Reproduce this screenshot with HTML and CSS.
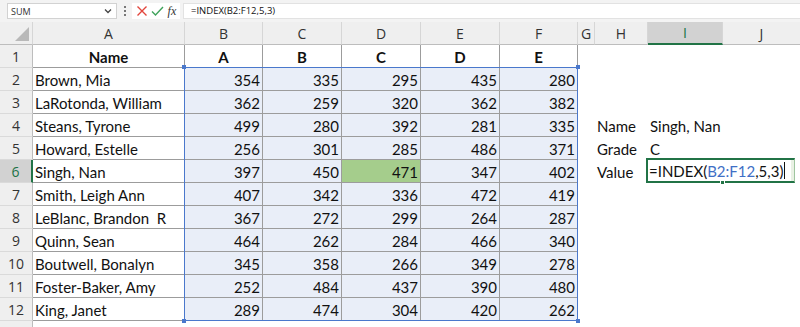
FILE: index.html
```html
<!DOCTYPE html>
<html lang="en">
<head>
    <meta charset="UTF-8">
    <meta name="viewport" content="width=device-width, initial-scale=1.0">
    <title>INDEX example</title>
    <link rel="stylesheet" href="styles.css">
</head>
<body>
    <div class="formula-bar">
        <div class="name-box">
            <span>SUM</span>
            <svg width="8" height="6" viewBox="0 0 8 6"><path d="M1 1.5 L4 4.5 L7 1.5" fill="none" stroke="#444" stroke-width="1.3"/></svg>
        </div>
        <div class="grip"><i></i><i></i><i></i></div>
        <div class="fx-buttons">
            <svg width="12" height="12" viewBox="0 0 12 12"><path d="M1.5 1.5 L10.5 10.5 M10.5 1.5 L1.5 10.5" stroke="#e2453c" stroke-width="1.4"/></svg>
            <svg width="13" height="12" viewBox="0 0 13 12"><path d="M1 6.5 L4.5 10 L12 2" fill="none" stroke="#3fa35b" stroke-width="1.4"/></svg>
            <span class="fx">fx</span>
        </div>
        <div class="formula-input">=INDEX(B2:F12,5,3)</div>
    </div>

    <div class="sheet">
        <div class="ch corner"><svg width="14" height="14" viewBox="0 0 14 14"><polygon points="14,0 14,14 0,14" fill="#b9b9b9"/></svg></div>
        <div class="ch">A</div>
        <div class="ch">B</div>
        <div class="ch">C</div>
        <div class="ch">D</div>
        <div class="ch">E</div>
        <div class="ch">F</div>
        <div class="ch">G</div>
        <div class="ch">H</div>
        <div class="ch active">I</div>
        <div class="ch">J</div>

        <div class="rh">1</div>
        <div class="c hd">Name</div>
        <div class="c hd">A</div>
        <div class="c hd">B</div>
        <div class="c hd">C</div>
        <div class="c hd">D</div>
        <div class="c hd">E</div>
        <div class="e"></div><div class="e"></div><div class="e"></div><div class="e"></div>

        <div class="rh">2</div>
        <div class="c">Brown, Mia</div>
        <div class="c num ref">354</div><div class="c num ref">335</div><div class="c num ref">295</div><div class="c num ref">435</div><div class="c num ref">280</div>
        <div class="e"></div><div class="e"></div><div class="e"></div><div class="e"></div>

        <div class="rh">3</div>
        <div class="c">LaRotonda, William</div>
        <div class="c num ref">362</div><div class="c num ref">259</div><div class="c num ref">320</div><div class="c num ref">362</div><div class="c num ref">382</div>
        <div class="e"></div><div class="e"></div><div class="e"></div><div class="e"></div>

        <div class="rh">4</div>
        <div class="c">Steans, Tyrone</div>
        <div class="c num ref">499</div><div class="c num ref">280</div><div class="c num ref">392</div><div class="c num ref">281</div><div class="c num ref">335</div>
        <div class="e"></div><div class="e label">Name</div><div class="e label">Singh, Nan</div><div class="e"></div>

        <div class="rh">5</div>
        <div class="c">Howard, Estelle</div>
        <div class="c num ref">256</div><div class="c num ref">301</div><div class="c num ref">285</div><div class="c num ref">486</div><div class="c num ref">371</div>
        <div class="e"></div><div class="e label">Grade</div><div class="e label">C</div><div class="e"></div>

        <div class="rh active">6</div>
        <div class="c">Singh, Nan</div>
        <div class="c num ref">397</div><div class="c num ref">450</div><div class="c num hit">471</div><div class="c num ref">347</div><div class="c num ref">402</div>
        <div class="e"></div><div class="e label">Value</div>
        <div class="e editing">
            <div class="edit-box">
                <span class="edit-text">=INDEX(<span class="ref-text">B2:F12</span>,5,3)</span><span class="caret"></span>
                <span class="edit-rest"></span>
                <span class="handle"></span>
            </div>
        </div>

        <div class="rh">7</div>
        <div class="c">Smith, Leigh Ann</div>
        <div class="c num ref">407</div><div class="c num ref">342</div><div class="c num ref">336</div><div class="c num ref">472</div><div class="c num ref">419</div>
        <div class="e"></div><div class="e"></div><div class="e"></div><div class="e"></div>

        <div class="rh">8</div>
        <div class="c">LeBlanc, Brandon&nbsp; R</div>
        <div class="c num ref">367</div><div class="c num ref">272</div><div class="c num ref">299</div><div class="c num ref">264</div><div class="c num ref">287</div>
        <div class="e"></div><div class="e"></div><div class="e"></div><div class="e"></div>

        <div class="rh">9</div>
        <div class="c">Quinn, Sean</div>
        <div class="c num ref">464</div><div class="c num ref">262</div><div class="c num ref">284</div><div class="c num ref">466</div><div class="c num ref">340</div>
        <div class="e"></div><div class="e"></div><div class="e"></div><div class="e"></div>

        <div class="rh">10</div>
        <div class="c">Boutwell, Bonalyn</div>
        <div class="c num ref">345</div><div class="c num ref">358</div><div class="c num ref">266</div><div class="c num ref">349</div><div class="c num ref">278</div>
        <div class="e"></div><div class="e"></div><div class="e"></div><div class="e"></div>

        <div class="rh">11</div>
        <div class="c">Foster-Baker, Amy</div>
        <div class="c num ref">252</div><div class="c num ref">484</div><div class="c num ref">437</div><div class="c num ref">390</div><div class="c num ref">480</div>
        <div class="e"></div><div class="e"></div><div class="e"></div><div class="e"></div>

        <div class="rh">12</div>
        <div class="c">King, Janet</div>
        <div class="c num ref">289</div><div class="c num ref">474</div><div class="c num ref">304</div><div class="c num ref">420</div><div class="c num ref">262</div>
        <div class="e"></div><div class="e"></div><div class="e"></div><div class="e"></div>

        <!-- row 13 only peeks in at the bottom edge -->
        <div class="rh"></div>

        <!-- blue outline of the referenced range B2:F12 -->
        <div class="range">
            <i class="dot tl"></i><i class="dot tr"></i><i class="dot bl"></i><i class="dot br"></i>
        </div>
    </div>
</body>
</html>
```

FILE: styles.css
```css
* {
    box-sizing: border-box;
}
body {
    margin: 0;
    height: 327px;
    overflow: hidden;
    background: #fff;
    font-family: Lato, "Liberation Sans", sans-serif;
}

/* formula bar */
.formula-bar {
    display: flex;
    align-items: center;
    height: 22px;
    background: #f3f3f3;
    padding-left: 7px;
}
.name-box {
    width: 110px;
    height: 16px;
    background: #fff;
    border: 1px solid #d2d2d2;
    display: flex;
    align-items: center;
    justify-content: space-between;
    padding: 0 4px 0 3px;
    font-family: "Open Sans", sans-serif;
    font-size: 9px;
    color: #333;
}
.grip {
    width: 15px;
    display: flex;
    flex-direction: column;
    align-items: center;
    gap: 2px;
}
.grip i {
    width: 2px;
    height: 2px;
    background: #777;
}
.fx-buttons {
    width: 48px;
    height: 16px;
    background: #fff;
    display: flex;
    align-items: center;
    justify-content: space-around;
    padding: 0 2px;
}
.fx {
    font-family: "Liberation Serif", serif;
    font-style: italic;
    font-size: 12px;
    color: #333;
}
.formula-input {
    flex: 1;
    height: 16px;
    margin-left: 3px;
    background: #fff;
    border: 1px solid #e2e2e2;
    border-right: none;
    padding-left: 7px;
    font-family: "Open Sans", sans-serif;
    font-size: 9.5px;
    line-height: 14px;
    color: #111;
}

/* grid */
.sheet {
    position: relative;
    display: grid;
    grid-template-columns: 33px 152px 78px 79px 79px 79px 78px 17px 53px 75px 78px;
    grid-template-rows: 23px;
    grid-auto-rows: 23px;
    font-size: 15px;
    color: #111;
}
.ch {
    background: #efefef;
    border-right: 1px solid #d6d6d6;
    border-bottom: 1px solid #bdbdbd;
    font-family: "Open Sans", sans-serif;
    font-size: 14px;
    color: #333;
    display: flex;
    align-items: center;
    justify-content: center;
}
.ch.corner {
    justify-content: flex-end;
    align-items: flex-end;
    padding: 0 3px 3px 0;
}
.ch.active {
    background: #d2d2d2;
    border-bottom: 2px solid #217346;
    color: #217346;
}
.rh {
    grid-column: 1;
    background: #efefef;
    border-right: 1px solid #bdbdbd;
    border-bottom: 1px solid #dadada;
    font-family: "Open Sans", sans-serif;
    font-size: 14px;
    color: #333;
    display: flex;
    align-items: center;
    justify-content: center;
}
.rh.active {
    background: #d2d2d2;
    color: #217346;
    border-right: 2px solid #217346;
}
.c {
    border-right: 1px solid #9c9c9c;
    border-bottom: 1px solid #9c9c9c;
    display: flex;
    align-items: center;
    padding: 1px 2px 0;
    white-space: nowrap;
}
.e {
    display: flex;
    align-items: center;
    padding: 1px 2px 0;
    white-space: nowrap;
}
.hd {
    font-weight: bold;
    justify-content: center;
}
.num {
    justify-content: flex-end;
}
.ref {
    background: #e9eef8;
}
.hit {
    background: #a5cd8c;
}

/* cell being edited */
.editing {
    grid-column: span 2;
    padding: 0;
}
.edit-box {
    position: relative;
    display: flex;
    align-items: center;
    width: 149px;
    height: 25px;
    margin: -2px 0 0 -2px;
    border: 2px solid #217346;
    border-right: 1px solid #9fc59f;
    background: #fff;
    padding-left: 1px;
}
.edit-text {
    padding-top: 1px;
}
.ref-text {
    color: #3f6fc6;
}
.caret {
    width: 1px;
    height: 17px;
    background: #111;
    margin-left: 1px;
}
.edit-rest {
    flex: 1;
    align-self: stretch;
    margin-left: 6px;
    background: #e9f1e4;
}
.handle {
    position: absolute;
    left: 72px;
    bottom: -4px;
    width: 5px;
    height: 5px;
    background: #217346;
    border: 1px solid #fff;
}

/* range outline */
.range {
    position: absolute;
    left: 184px;
    top: 45px;
    width: 394px;
    height: 254px;
    border: 1px solid #4a78cc;
    pointer-events: none;
}
.dot {
    position: absolute;
    width: 4px;
    height: 4px;
    background: #4a78cc;
}
.tl { left: -3px; top: -3px; }
.tr { right: -3px; top: -3px; }
.bl { left: -3px; bottom: -3px; }
.br { right: -3px; bottom: -3px; }
```
